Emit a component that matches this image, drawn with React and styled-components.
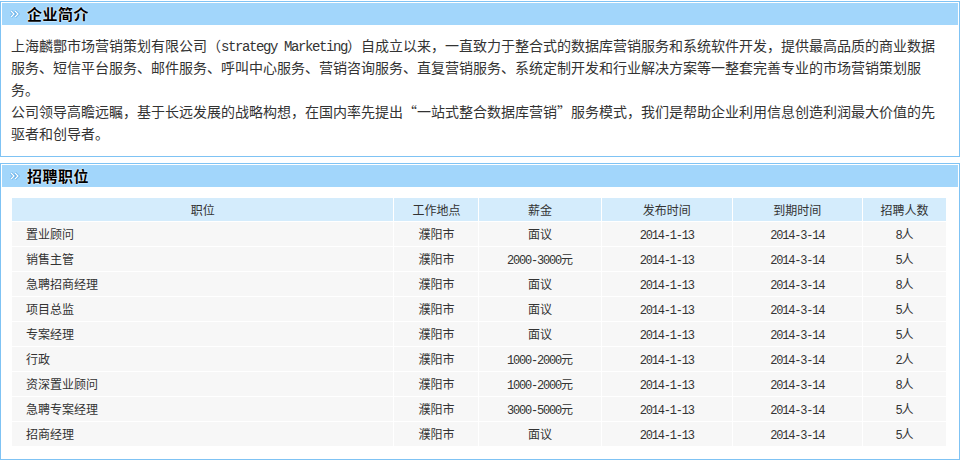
import React from "react";
import styled, { createGlobalStyle } from "styled-components";

const GlobalStyle = createGlobalStyle`
  body {
    margin: 0;
    background: #fff;
    font-family: "Noto Sans CJK SC", "Liberation Sans", sans-serif;
    color: #333;
  }
`;

// layout
const Page = styled.div`
  width: 960px;
  padding-top: 1px;
  display: flex;
  flex-direction: column;
  gap: 6px;
`;

const Panel = styled.section`
  width: 956px;
  border: 1px solid #7fc3f4;
  padding: 1px;
`;

const PanelHead = styled.h2`
  margin: 0;
  height: 22px;
  background: #a2d6fb;
  display: flex;
  align-items: center;
  padding-left: 8px;
  gap: 6px;
  font-size: 15px;
  line-height: 22px;
  font-weight: bold;
  color: #000;
  letter-spacing: 0.5px;
  text-shadow: 0 0 2px #fff, 0 0 1px #fff;
`;

const Intro = styled.div`
  padding: 9px 10px 11px 9px;
  width: 936px;
  font-size: 14px;
  line-height: 22px;
  height: 110px;
  color: #333;
`;

const Mono = styled.span`
  font-family: "Liberation Mono", monospace;
  line-height: 1;
  letter-spacing: ${(p) => (p.$small ? "-1.2px" : "-1.4px")};
  font-size: ${(p) => (p.$small ? "12px" : "14px")};
`;

const TableWrap = styled.div`
  padding: 10px 10px 11px 9px;
`;

const JobTable = styled.table`
  border-collapse: separate;
  border-spacing: 1px;
  width: 936px;
  font-size: 12px;
  line-height: 16px;
  color: #333;
  table-layout: fixed;
`;

const Th = styled.th`
  background: #d4ecfc;
  height: 23px;
  padding: 0;
  font-weight: normal;
  text-align: center;
  width: ${(p) => p.$w}px;
`;

const Td = styled.td`
  background: #f7f7f7;
  height: 24px;
  padding: ${(p) => (p.$left ? "0 0 0 14px" : "0")};
  text-align: ${(p) => (p.$left ? "left" : "center")};
`;

const Arrow = () => (
  <svg width="11" height="8" viewBox="0 0 11 8">
    <path d="M1 1 L4 4 L1 7 M5 1 L8 4 L5 7" fill="none" stroke="#5aa9e6" strokeWidth="2.6" />
    <path d="M1 1 L4 4 L1 7 M5 1 L8 4 L5 7" fill="none" stroke="#fff" strokeWidth="1.3" />
  </svg>
);

const columns = [
  { title: "职位", w: 381 },
  { title: "工作地点", w: 84 },
  { title: "薪金", w: 121 },
  { title: "发布时间", w: 130 },
  { title: "到期时间", w: 129 },
  { title: "招聘人数", w: 83 },
];

const jobs = [
  ["置业顾问", "面议", "8"],
  ["销售主管", "2000-3000元", "5"],
  ["急聘招商经理", "面议", "8"],
  ["项目总监", "面议", "5"],
  ["专案经理", "面议", "5"],
  ["行政", "1000-2000元", "2"],
  ["资深置业顾问", "1000-2000元", "8"],
  ["急聘专案经理", "3000-5000元", "5"],
  ["招商经理", "面议", "5"],
];

function Salary({ value }) {
  if (value === "面议") return value;
  return (
    <>
      <Mono $small>{value.replace("元", "")}</Mono>元
    </>
  );
}

export default function App() {
  return (
    <>
      <GlobalStyle />
      <Page lang="zh-CN">
        <Panel>
          <PanelHead>
            <Arrow />
            企业简介
          </PanelHead>
          <Intro>
            上海麟酆市场营销策划有限公司（<Mono>strategy Marketing</Mono>）自成立以来，一直致力于整合式的数据库营销服务和系统软件开发，提供最高品质的商业数据
            <br />
            服务、短信平台服务、邮件服务、呼叫中心服务、营销咨询服务、直复营销服务、系统定制开发和行业解决方案等一整套完善专业的市场营销策划服
            <br />
            务。
            <br />
            公司领导高瞻远瞩，基于长远发展的战略构想，在国内率先提出“一站式整合数据库营销”服务模式，我们是帮助企业利用信息创造利润最大价值的先
            <br />
            驱者和创导者。
          </Intro>
        </Panel>

        <Panel>
          <PanelHead>
            <Arrow />
            招聘职位
          </PanelHead>
          <TableWrap>
            <JobTable>
              <thead>
                <tr>
                  {columns.map((c) => (
                    <Th key={c.title} $w={c.w}>
                      {c.title}
                    </Th>
                  ))}
                </tr>
              </thead>
              <tbody>
                {jobs.map(([name, pay, count], idx) => (
                  <tr key={idx}>
                    <Td $left>{name}</Td>
                    <Td>濮阳市</Td>
                    <Td>
                      <Salary value={pay} />
                    </Td>
                    <Td>
                      <Mono $small>2014-1-13</Mono>
                    </Td>
                    <Td>
                      <Mono $small>2014-3-14</Mono>
                    </Td>
                    <Td>
                      <Mono $small>{count}</Mono>人
                    </Td>
                  </tr>
                ))}
              </tbody>
            </JobTable>
          </TableWrap>
        </Panel>
      </Page>
    </>
  );
}
